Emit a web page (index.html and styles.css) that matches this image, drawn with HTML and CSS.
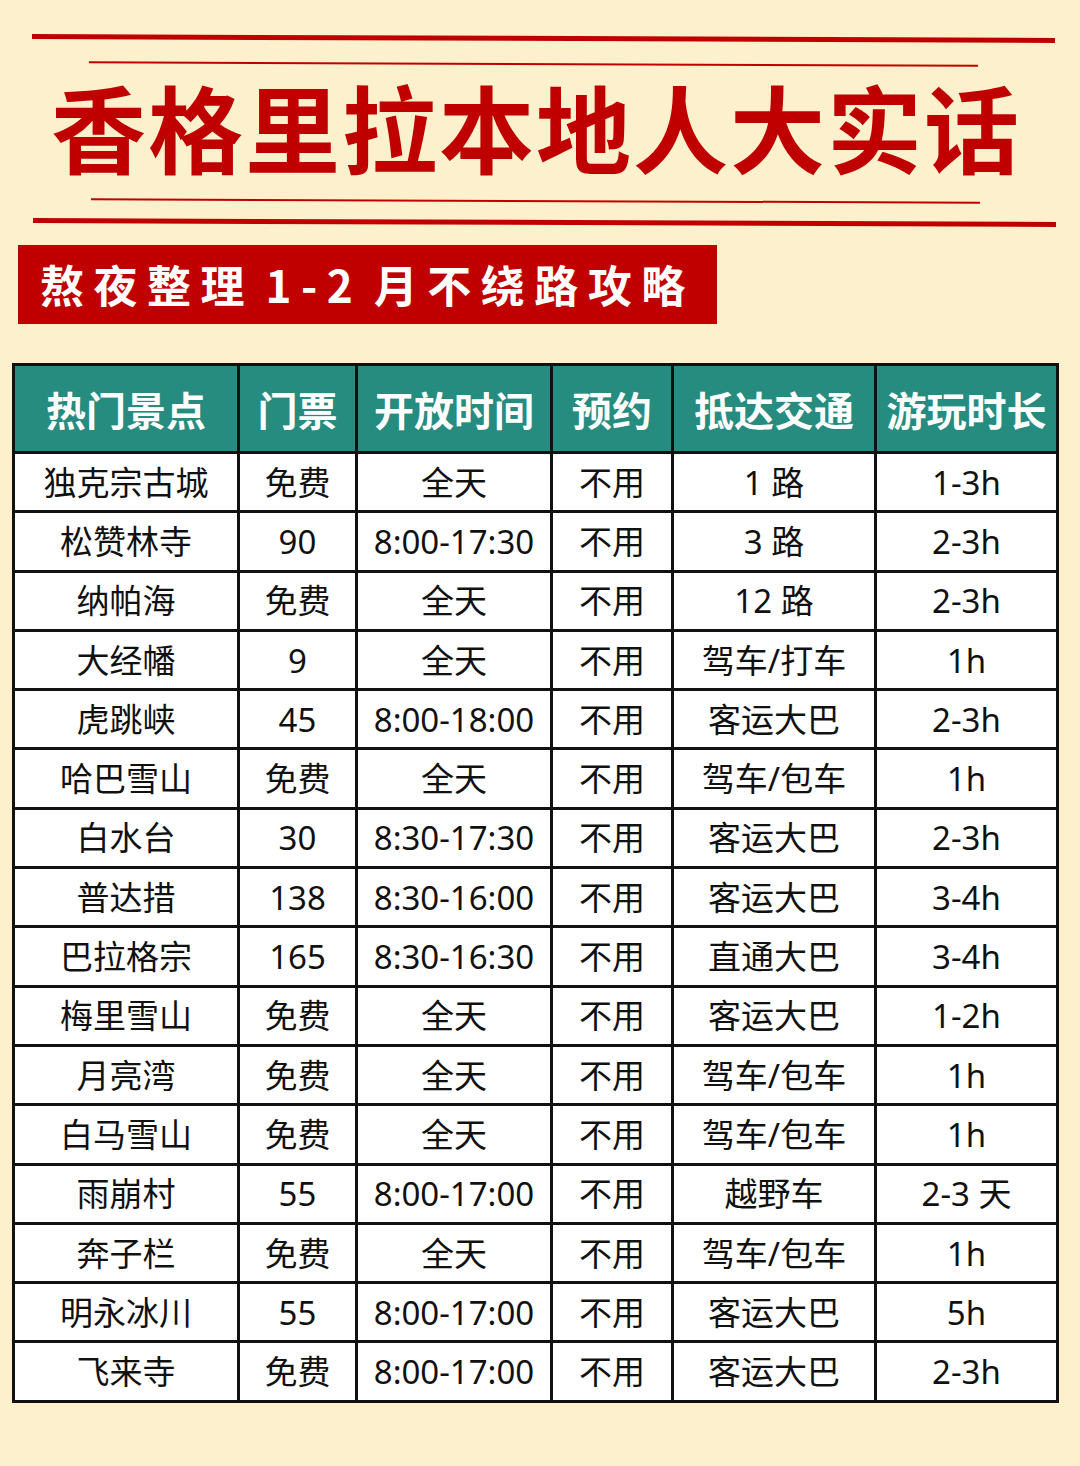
FILE: index.html
```html
<!DOCTYPE html>
<html lang="zh-CN">
<head>
<meta charset="utf-8">
<title>香格里拉本地人大实话</title>
<link rel="stylesheet" href="styles.css">
</head>
<body>
<div class="page">
  <header class="hero">
    <div class="rule rule-thick rule-top"></div>
    <div class="rule rule-thin rule-top-thin"></div>
    <h1 class="title">香格里拉本地人大实话</h1>
    <div class="rule rule-thin rule-bottom-thin"></div>
    <div class="rule rule-thick rule-bottom"></div>
  </header>
  <div class="banner">熬夜整理 1-2 月不绕路攻略</div>
  <table class="guide">
    <colgroup>
      <col class="c1"><col class="c2"><col class="c3"><col class="c4"><col class="c5"><col class="c6">
    </colgroup>
    <thead>
      <tr><th>热门景点</th><th>门票</th><th>开放时间</th><th>预约</th><th>抵达交通</th><th>游玩时长</th></tr>
    </thead>
    <tbody>
      <tr><td>独克宗古城</td><td>免费</td><td>全天</td><td>不用</td><td>1 路</td><td>1-3h</td></tr>
      <tr><td>松赞林寺</td><td>90</td><td>8:00-17:30</td><td>不用</td><td>3 路</td><td>2-3h</td></tr>
      <tr><td>纳帕海</td><td>免费</td><td>全天</td><td>不用</td><td>12 路</td><td>2-3h</td></tr>
      <tr><td>大经幡</td><td>9</td><td>全天</td><td>不用</td><td>驾车/打车</td><td>1h</td></tr>
      <tr><td>虎跳峡</td><td>45</td><td>8:00-18:00</td><td>不用</td><td>客运大巴</td><td>2-3h</td></tr>
      <tr><td>哈巴雪山</td><td>免费</td><td>全天</td><td>不用</td><td>驾车/包车</td><td>1h</td></tr>
      <tr><td>白水台</td><td>30</td><td>8:30-17:30</td><td>不用</td><td>客运大巴</td><td>2-3h</td></tr>
      <tr><td>普达措</td><td>138</td><td>8:30-16:00</td><td>不用</td><td>客运大巴</td><td>3-4h</td></tr>
      <tr><td>巴拉格宗</td><td>165</td><td>8:30-16:30</td><td>不用</td><td>直通大巴</td><td>3-4h</td></tr>
      <tr><td>梅里雪山</td><td>免费</td><td>全天</td><td>不用</td><td>客运大巴</td><td>1-2h</td></tr>
      <tr><td>月亮湾</td><td>免费</td><td>全天</td><td>不用</td><td>驾车/包车</td><td>1h</td></tr>
      <tr><td>白马雪山</td><td>免费</td><td>全天</td><td>不用</td><td>驾车/包车</td><td>1h</td></tr>
      <tr><td>雨崩村</td><td>55</td><td>8:00-17:00</td><td>不用</td><td>越野车</td><td>2-3 天</td></tr>
      <tr><td>奔子栏</td><td>免费</td><td>全天</td><td>不用</td><td>驾车/包车</td><td>1h</td></tr>
      <tr><td>明永冰川</td><td>55</td><td>8:00-17:00</td><td>不用</td><td>客运大巴</td><td>5h</td></tr>
      <tr><td>飞来寺</td><td>免费</td><td>8:00-17:00</td><td>不用</td><td>客运大巴</td><td>2-3h</td></tr>
    </tbody>
  </table>
</div>
</body>
</html>
```

FILE: styles.css
```css
html, body {
  margin: 0;
  padding: 0;
}
body {
  background: #fdf0cc;
  font-family: "Noto Sans CJK SC", "Noto Sans", sans-serif;
  width: 1080px;
  height: 1466px;
  overflow: hidden;
}
.page {
  display: flex;
  flex-direction: column;
  align-items: flex-start;
  padding-top: 36px;
}
.hero {
  display: flex;
  flex-direction: column;
  align-items: flex-start;
  width: 100%;
}
.rule {
  background: #c00000;
  transform: rotate(0.22deg);
}
.rule-thick {
  height: 5px;
  margin-left: 32px;
  width: 1023px;
}
.rule-thin {
  height: 2px;
  margin-left: 89px;
  width: 889px;
}
.rule-top-thin {
  margin-top: 22px;
}
.title {
  margin: 13px 0 0 51px;
  font-size: 95px;
  line-height: 95px;
  height: 95px;
  font-weight: 700;
  letter-spacing: 2px;
  color: #c00000;
  white-space: nowrap;
}
.rule-bottom-thin {
  margin-top: 27px;
  margin-left: 91px;
}
.rule-bottom {
  margin-top: 18px;
  margin-left: 33px;
}
.banner {
  margin: 20px 0 0 18px;
  width: 699px;
  height: 79px;
  box-sizing: border-box;
  padding-left: 22px;
  background: #c00000;
  color: #fff;
  font-size: 44px;
  line-height: 79px;
  font-weight: 700;
  letter-spacing: 9.5px;
  word-spacing: -8px;
  white-space: nowrap;
}
.guide {
  margin: 39px 0 0 12px;
  width: 1044px;
  table-layout: fixed;
  border-collapse: collapse;
  border: 3px solid #111;
}
.c1 { width: 225px; }
.c2 { width: 118px; }
.c3 { width: 195px; }
.c4 { width: 121px; }
.c5 { width: 203px; }
.c6 { width: 182px; }
.guide th,
.guide td {
  border: 3px solid #111;
  padding: 0;
  text-align: center;
  vertical-align: middle;
  white-space: nowrap;
}
.guide th {
  height: 85px;
  background: #268c80;
  color: #fff;
  font-size: 40px;
  font-weight: 700;
  letter-spacing: 0;
}
.guide td {
  height: 56.3px;
  background: #fff;
  color: #111;
  font-family: "Noto Sans", "Noto Sans CJK SC", sans-serif;
  font-size: 33px;
  font-weight: 400;
  line-height: 1;
}
```
